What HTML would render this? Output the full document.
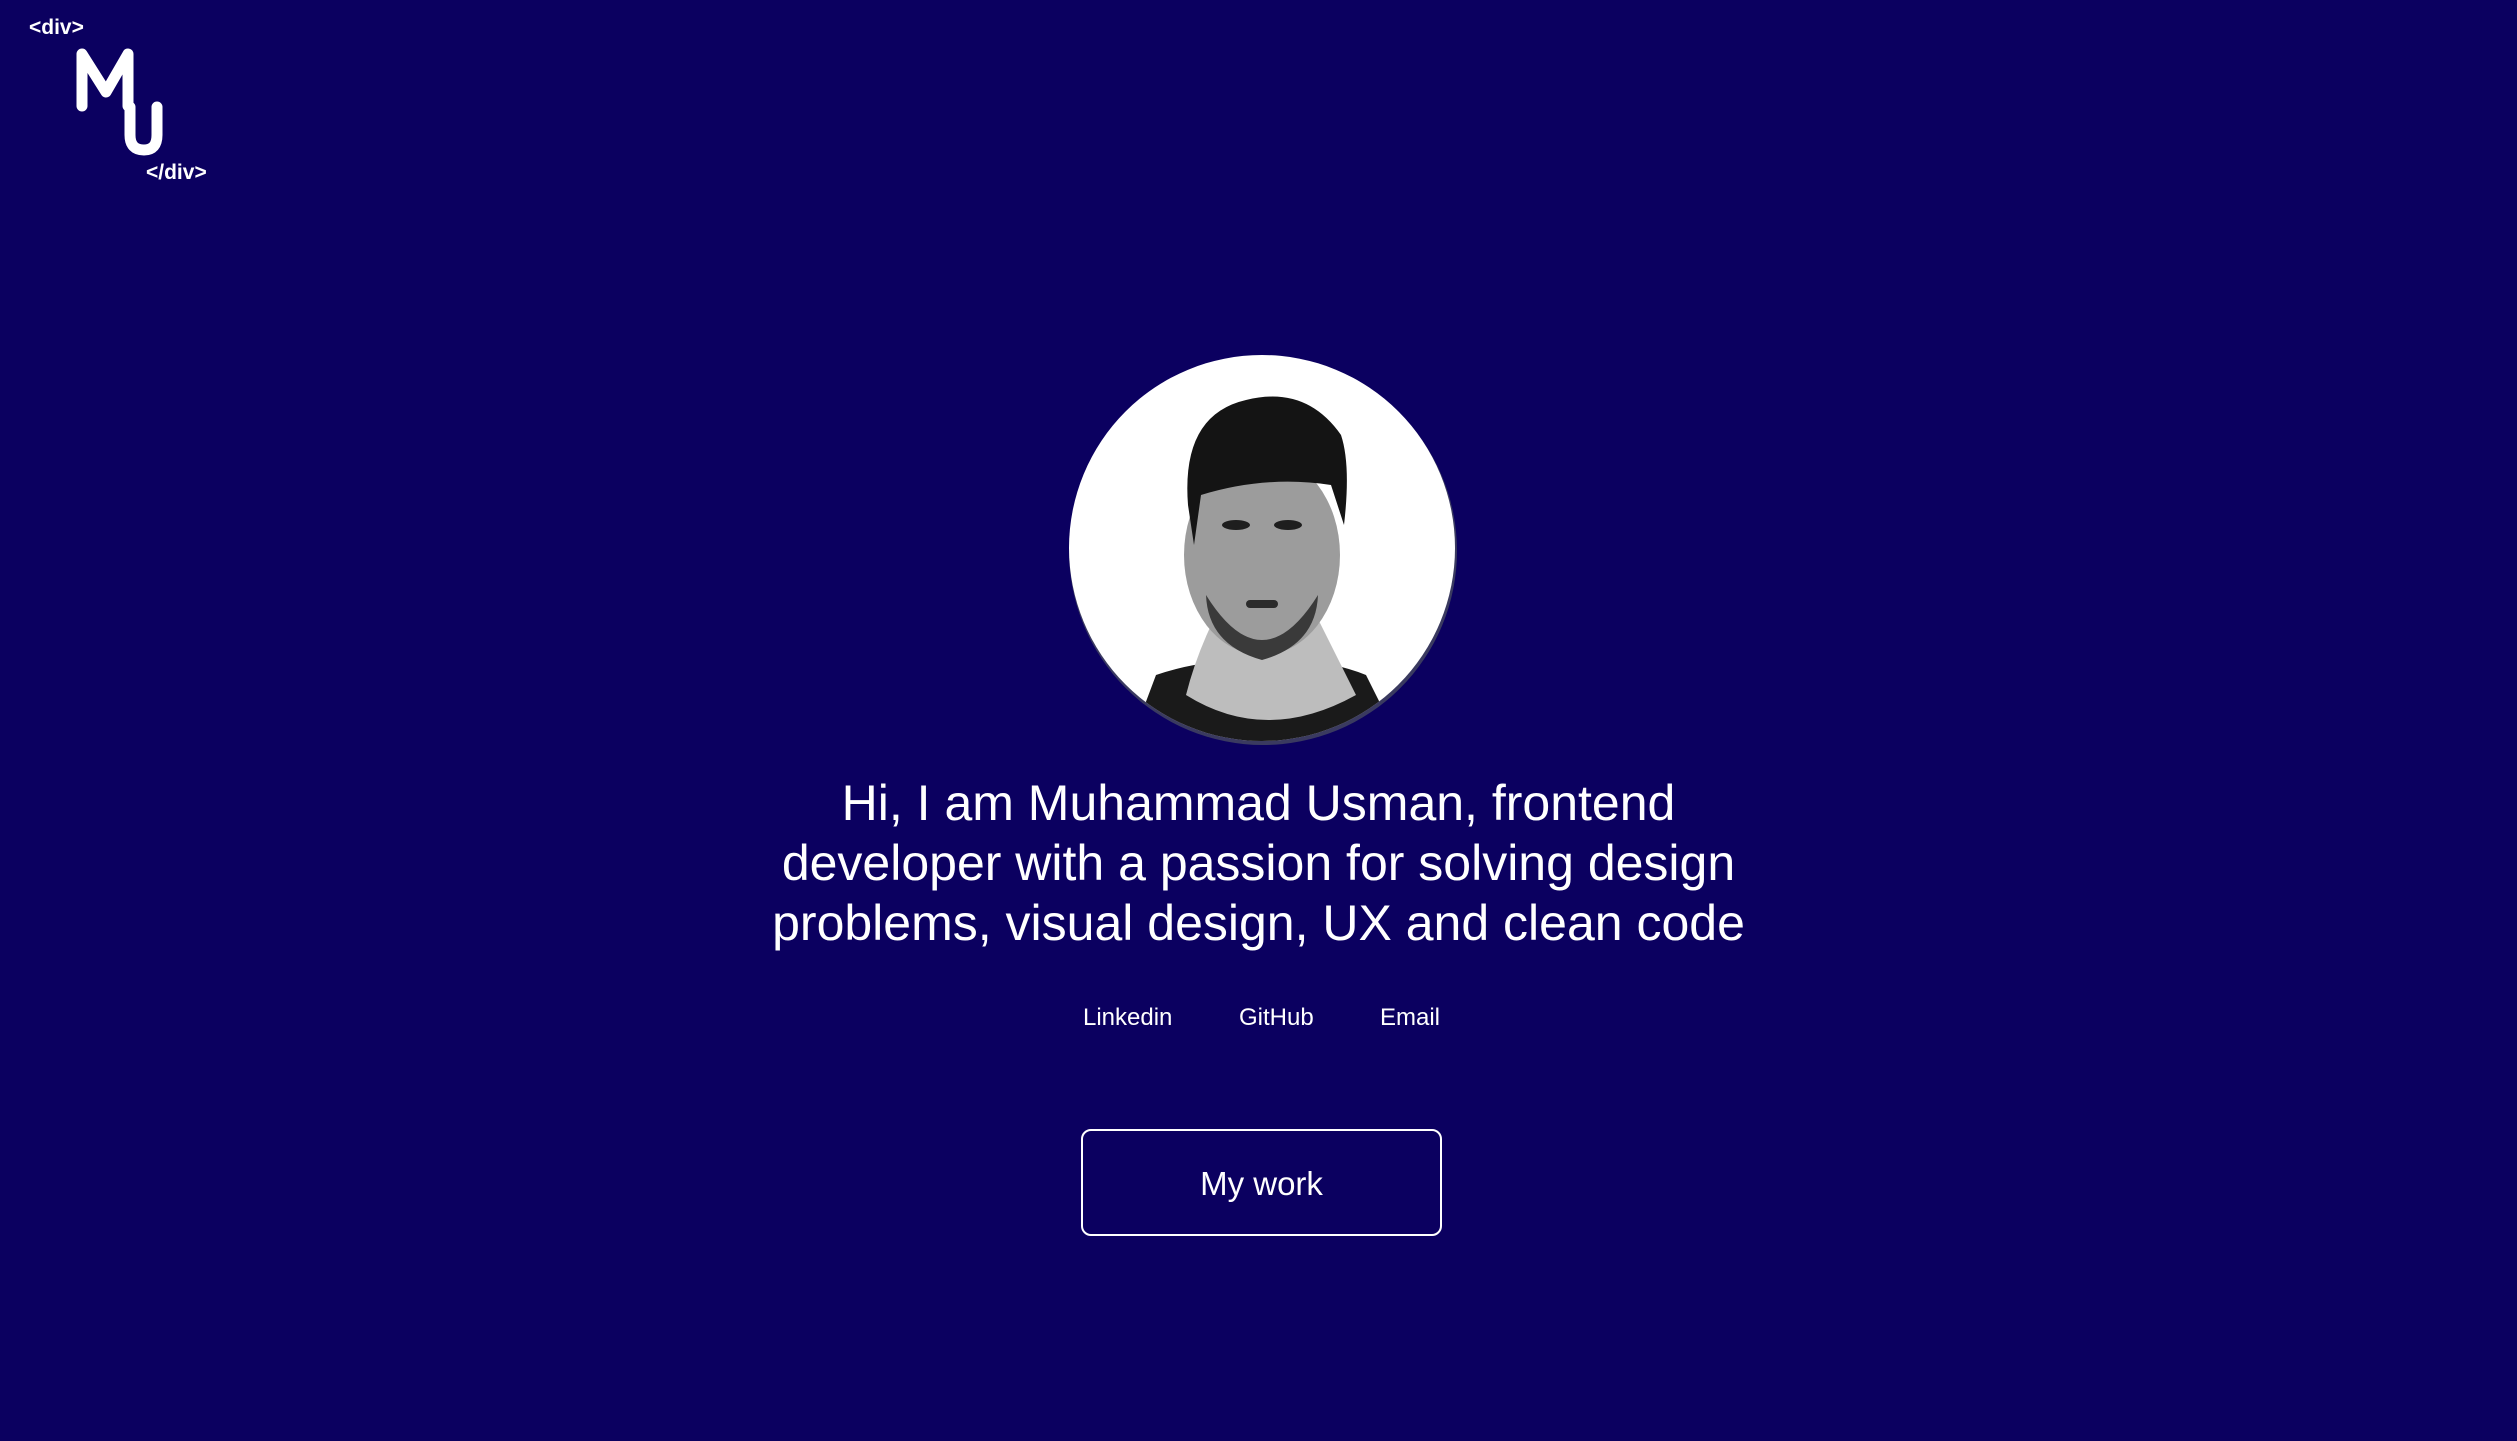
<!DOCTYPE html>
<html><head><meta charset="utf-8"><style>
html,body{margin:0;padding:0}
body{width:2517px;height:1441px;background:#0b0060;position:relative;overflow:hidden;font-family:"Liberation Sans",sans-serif;color:#fff}
.a{position:absolute}
.tag{font-weight:bold;font-size:21px}
h1{position:absolute;left:0;width:2517px;top:773px;margin:0;text-align:center;font-weight:normal;font-size:50px;line-height:60px}
.l{font-size:24px;top:1004px}
.btn{left:1081px;top:1129px;width:357px;height:103px;border:2px solid #fff;border-radius:10px;text-align:center;line-height:105px;font-size:33px}
</style></head><body>
<div class="a tag" style="left:29px;top:16px">&lt;div&gt;</div>
<div class="a tag" style="left:146px;top:161px">&lt;/div&gt;</div>
<svg class="a" style="left:0;top:0" width="240" height="200">
<path d="M82 106 V54 L106 92 L128 54 V106" fill="none" stroke="#fff" stroke-width="11" stroke-linecap="round" stroke-linejoin="round"/>
<path d="M130 107 V135 Q130 150 144 150 Q157 150 157 135 V107" fill="none" stroke="#fff" stroke-width="11" stroke-linecap="round"/>
</svg>
<svg class="a" style="left:1066px;top:355px" width="394" height="394">
<defs><clipPath id="c"><circle cx="196" cy="193" r="193"/></clipPath></defs>
<circle cx="197" cy="196" r="194" fill="#3a3a60"/>
<g clip-path="url(#c)">
<rect width="394" height="394" fill="#fff"/>
<path d="M60 400 L90 320 Q150 300 196 310 Q250 300 300 320 L340 400Z" fill="#1a1a1a"/>
<path d="M120 340 Q130 300 150 260 L250 260 Q270 300 290 340 Q200 390 120 340Z" fill="#bdbdbd"/>
<ellipse cx="196" cy="200" rx="78" ry="100" fill="#9c9c9c"/>
<path d="M140 240 Q196 330 252 240 Q250 290 196 305 Q142 290 140 240Z" fill="#3a3a3a"/>
<path d="M122 150 Q115 60 180 45 Q240 30 275 80 Q285 110 278 170 L265 130 Q200 120 135 140 L128 190Z" fill="#141414"/>
<ellipse cx="170" cy="170" rx="14" ry="5" fill="#1e1e1e"/>
<ellipse cx="222" cy="170" rx="14" ry="5" fill="#1e1e1e"/>
<rect x="180" y="245" width="32" height="8" rx="4" fill="#2b2b2b"/>
</g>
</svg>
<h1>Hi, I am Muhammad Usman, frontend<br>developer with a passion for solving design<br>problems, visual design, UX and clean code</h1>
<div class="a l" style="left:1083px">Linkedin</div>
<div class="a l" style="left:1239px">GitHub</div>
<div class="a l" style="left:1380px">Email</div>
<div class="a btn">My work</div>
</body></html>
